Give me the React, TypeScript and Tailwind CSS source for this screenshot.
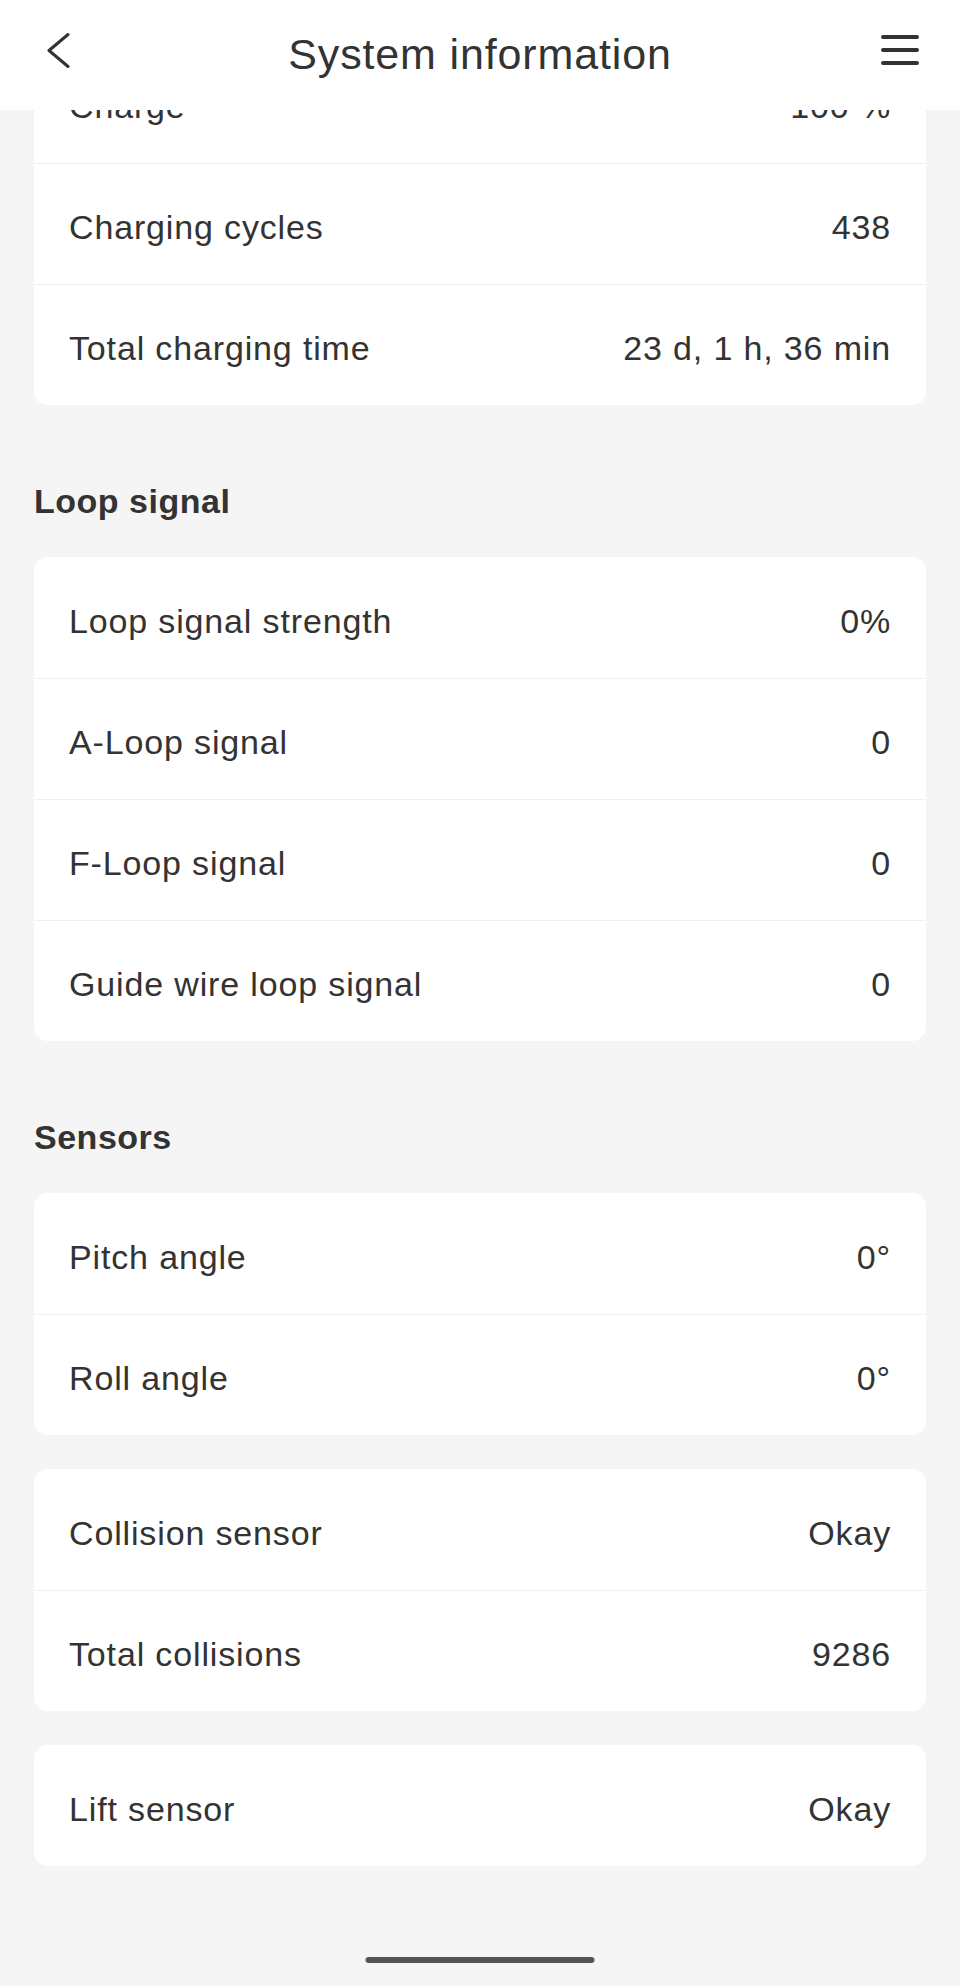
import React from 'react';

type Row = { label: string; value: string };

const batteryRows: Row[] = [
  { label: 'Charge', value: '100 %' },
  { label: 'Charging cycles', value: '438' },
  { label: 'Total charging time', value: '23 d, 1 h, 36 min' },
];

const loopRows: Row[] = [
  { label: 'Loop signal strength', value: '0%' },
  { label: 'A-Loop signal', value: '0' },
  { label: 'F-Loop signal', value: '0' },
  { label: 'Guide wire loop signal', value: '0' },
];

const angleRows: Row[] = [
  { label: 'Pitch angle', value: '0°' },
  { label: 'Roll angle', value: '0°' },
];

const collisionRows: Row[] = [
  { label: 'Collision sensor', value: 'Okay' },
  { label: 'Total collisions', value: '9286' },
];

const liftRows: Row[] = [{ label: 'Lift sensor', value: 'Okay' }];

const InfoCard: React.FC<{ rows: Row[] }> = ({ rows }) => (
  <div className="bg-white rounded-[14px] overflow-hidden">
    {rows.map((row, i) => (
      <div
        key={row.label}
        className={
          'flex items-center justify-between h-[121px] px-[35px] pt-[7px] text-[34px] tracking-[0.025em] ' +
          (i > 0 ? 'border-t border-[#f0f0f0]' : '')
        }
      >
        <span>{row.label}</span>
        <span>{row.value}</span>
      </div>
    ))}
  </div>
);

const SectionTitle: React.FC<{ children: React.ReactNode }> = ({ children }) => (
  <h2 className="pt-[76px] pb-[36px] text-[34px] leading-[40px] font-bold tracking-[0.015em]">
    {children}
  </h2>
);

export default function App() {
  return (
    <div className="relative min-h-[1986px] bg-[#f5f5f5] text-[#333333] font-['Liberation_Sans',Arial,sans-serif]">
      <header className="absolute top-0 inset-x-0 z-10 h-[110px] bg-white grid grid-cols-[1fr_auto_1fr] items-start px-[38px] pt-[29px]">
        <div className="flex justify-start">
          <svg className="ml-[8px] mt-[3px]" width="24" height="37" viewBox="0 0 24 37" fill="none">
            <path
              d="M22 2.5 L3 18.5 L22 34.5"
              stroke="#333333"
              strokeWidth="3"
              strokeLinecap="round"
              strokeLinejoin="round"
            />
          </svg>
        </div>
        <h1 className="text-[43px] leading-[50px] tracking-[0.02em] font-normal">System information</h1>
        <div className="flex justify-end">
          <svg className="mt-[3px]" width="44" height="36" viewBox="0 0 44 36" fill="none">
            <path
              d="M5 5 H39 M5 18 H39 M5 31 H39"
              stroke="#333333"
              strokeWidth="4"
              strokeLinecap="round"
            />
          </svg>
        </div>
      </header>

      <main className="px-[34px] pt-[42px]">
        <InfoCard rows={batteryRows} />

        <SectionTitle>Loop signal</SectionTitle>
        <InfoCard rows={loopRows} />

        <SectionTitle>Sensors</SectionTitle>
        <div className="flex flex-col gap-[34px]">
          <InfoCard rows={angleRows} />
          <InfoCard rows={collisionRows} />
          <InfoCard rows={liftRows} />
        </div>
      </main>

      <div className="absolute bottom-[23px] left-1/2 -translate-x-1/2 w-[229px] h-[6px] rounded-full bg-[#555555]" />
    </div>
  );
}
